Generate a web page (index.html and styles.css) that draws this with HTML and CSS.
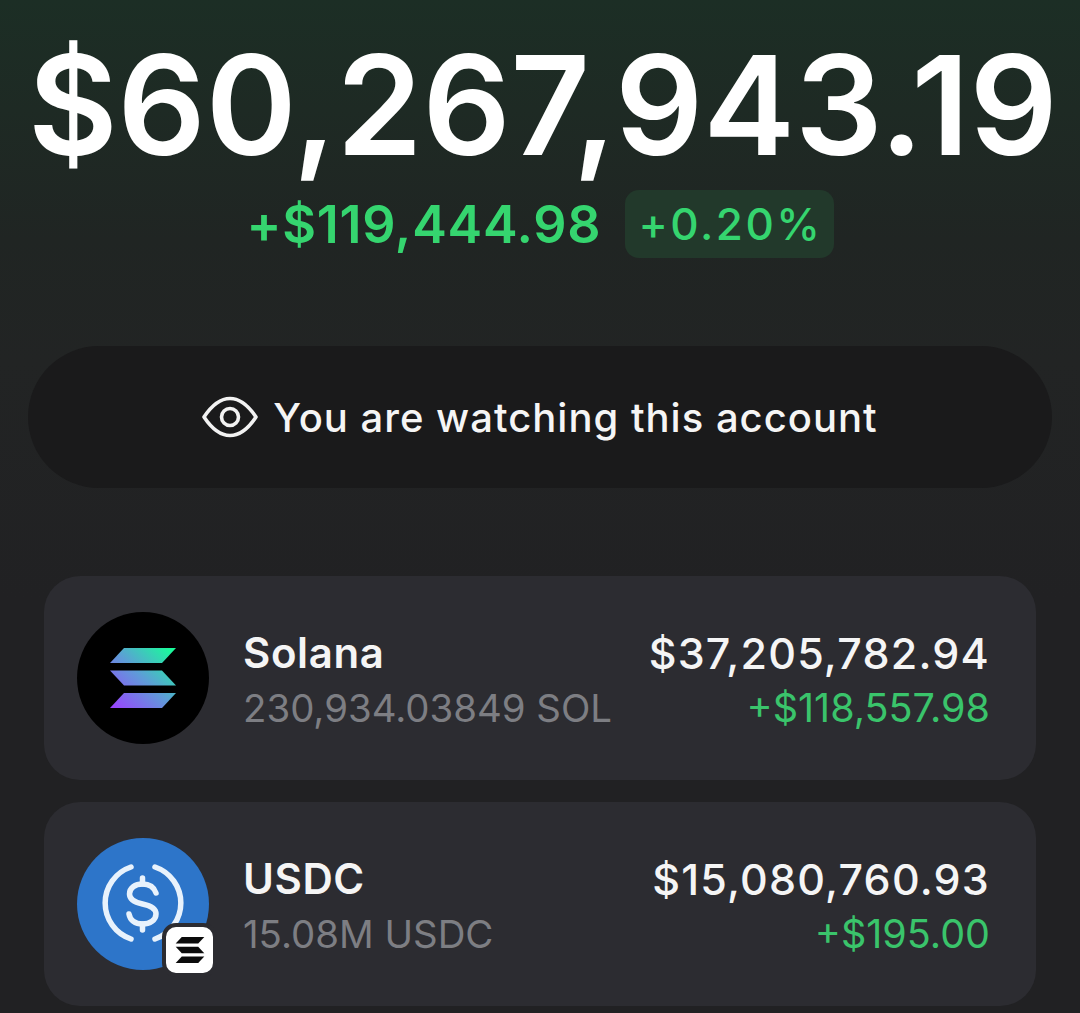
FILE: index.html
```html
<!DOCTYPE html>
<html lang="en">
  <head>
    <meta charset="UTF-8" />
    <meta name="viewport" content="width=device-width, initial-scale=1.0" />
    <title>Wallet</title>
    <link rel="stylesheet" href="styles.css">
  </head>
  <body>
    <div class="screen">
      <h1 class="balance">$60,267,943.19</h1>
      <div class="change">
        <span class="change-amount">+$119,444.98</span>
        <span class="change-pct">+0.20%</span>
      </div>

      <div class="watching">
        <svg class="eye" width="56" height="42" viewBox="0 0 56 42" fill="none" stroke="#f2f2f2" stroke-width="3.6">
          <path d="M2 21 C10 9 18 2.500 28 2.500 C38 2.500 46 9 54 21 C46 33 38 39.500 28 39.500 C18 39.500 10 33 2 21 Z" stroke-linejoin="round" />
          <circle cx="28" cy="21" r="8.500" />
        </svg>
        <span>You are watching this account</span>
      </div>

      <div class="token">
        <div class="token-icon sol-icon">
          <svg width="66" height="60" viewBox="0 0 66 60">
            <defs>
              <linearGradient id="solGrad" gradientUnits="userSpaceOnUse" x1="4" y1="60" x2="60" y2="0">
                <stop offset="0" stop-color="#9945ff" />
                <stop offset="0.5" stop-color="#5f9bd8" />
                <stop offset="1" stop-color="#19fb9b" />
              </linearGradient>
            </defs>
            <path fill="url(#solGrad)" d="M14 0 H66 L52 15 H0 Z" />
            <path fill="url(#solGrad)" d="M0 22.500 H52 L66 37.500 H14 Z" />
            <path fill="url(#solGrad)" d="M14 45 H66 L52 60 H0 Z" />
          </svg>
        </div>
        <div class="token-info">
          <div class="token-name">Solana</div>
          <div class="token-sub">230,934.03849 SOL</div>
        </div>
        <div class="token-values">
          <div class="token-value">$37,205,782.94</div>
          <div class="token-gain">+$118,557.98</div>
        </div>
      </div>

      <div class="token">
        <div class="token-icon usdc-icon">
          <svg width="132" height="132" viewBox="0 0 132 132" fill="none" stroke="#e8f2fc">
            <path stroke-width="5.500" stroke-linecap="round" d="M54 29 A38 38 0 0 0 54 101" />
            <path stroke-width="5.500" stroke-linecap="round" d="M78 29 A38 38 0 0 1 78 101" />
            <path stroke-width="5.500" stroke-linecap="round" d="M79 55 C77 49 72 46 65.500 46 C58 46 52.500 50 52.500 56 C52.500 62 58 64.500 65.500 66 C73 67.500 79 70 79 76 C79 82 73 86 65.500 86 C58 86 53 82 52 76" />
            <path stroke-width="5.500" stroke-linecap="round" d="M65.500 40 V46 M65.500 86 V92" />
          </svg>
          <div class="chain-badge">
            <svg width="30" height="26" viewBox="0 0 66 60">
              <path fill="#0b0b0b" d="M14 0 H66 L52 15 H0 Z" />
              <path fill="#0b0b0b" d="M0 22.500 H52 L66 37.500 H14 Z" />
              <path fill="#0b0b0b" d="M14 45 H66 L52 60 H0 Z" />
            </svg>
          </div>
        </div>
        <div class="token-info">
          <div class="token-name">USDC</div>
          <div class="token-sub">15.08M USDC</div>
        </div>
        <div class="token-values">
          <div class="token-value">$15,080,760.93</div>
          <div class="token-gain">+$195.00</div>
        </div>
      </div>
    </div>
  </body>
</html>
```

FILE: styles.css
```css
html,
body {
  margin: 0;
  padding: 0;
  background-color: #212123;
}

body {
  font-family: Inter, "Liberation Sans", sans-serif;
  color: #f5f5f5;
}

.screen {
  height: 1013px;
  overflow: hidden;
  box-sizing: border-box;
  padding: 30px 28px 0;
  background: linear-gradient(to bottom, #1c2e25 0, #1e2a24 110px, #202523 240px, #222424 360px, #212123 600px);
}

.balance {
  margin: 0;
  padding-right: 6px;
  font-size: 138px;
  line-height: 150px;
  font-weight: 600;
  letter-spacing: -0.15px;
  color: #fff;
  text-align: center;
  white-space: nowrap;
}

.change {
  display: flex;
  justify-content: center;
  align-items: center;
  gap: 24px;
  height: 68px;
  margin-top: 10px;
  color: #35d56f;
}

.change-amount {
  font-size: 52px;
  font-weight: 600;
  letter-spacing: 0.75px;
}

.change-pct {
  font-size: 44px;
  font-weight: 500;
  letter-spacing: 2.5px;
  padding: 7px 11px 7px 13px;
  background-color: #22392b;
  border-radius: 14px;
}

.watching {
  display: flex;
  align-items: center;
  justify-content: center;
  gap: 15px;
  height: 142px;
  margin-top: 88px;
  background-color: #1a1a1b;
  border-radius: 71px;
  font-size: 40px;
  font-weight: 500;
  letter-spacing: 1px;
}

.token {
  display: flex;
  align-items: center;
  height: 204px;
  box-sizing: border-box;
  margin: 22px 16px 0;
  padding: 0 46px 0 33px;
  background-color: #2c2c31;
  border-radius: 36px;
}

.watching + .token {
  margin-top: 88px;
}

.token-icon {
  position: relative;
  flex: none;
  width: 132px;
  height: 132px;
  border-radius: 50%;
  display: flex;
  align-items: center;
  justify-content: center;
}

.sol-icon {
  background-color: #000;
}

.usdc-icon {
  background-color: #2d75c9;
}

.chain-badge {
  position: absolute;
  right: -8px;
  bottom: -7px;
  width: 47px;
  height: 46px;
  display: flex;
  align-items: center;
  justify-content: center;
  background-color: #fff;
  border: 4px solid #2c2c31;
  border-radius: 14px;
}

.token-info {
  flex: 1;
  margin-left: 34px;
  padding-top: 4px;
}

.token-name,
.token-value {
  font-size: 43px;
  font-weight: 500;
  line-height: 50px;
  letter-spacing: 1.2px;
}

.token-name {
  font-size: 42px;
  font-weight: 600;
  letter-spacing: 0.6px;
}

.token-sub,
.token-gain {
  line-height: 48px;
  margin-top: 6px;
}

.token-sub {
  font-size: 38.4px;
  color: #7d7e83;
}

.token-values {
  padding-top: 4px;
  text-align: right;
}

.token-gain {
  font-size: 39.5px;
  color: #3ac46b;
}
```
